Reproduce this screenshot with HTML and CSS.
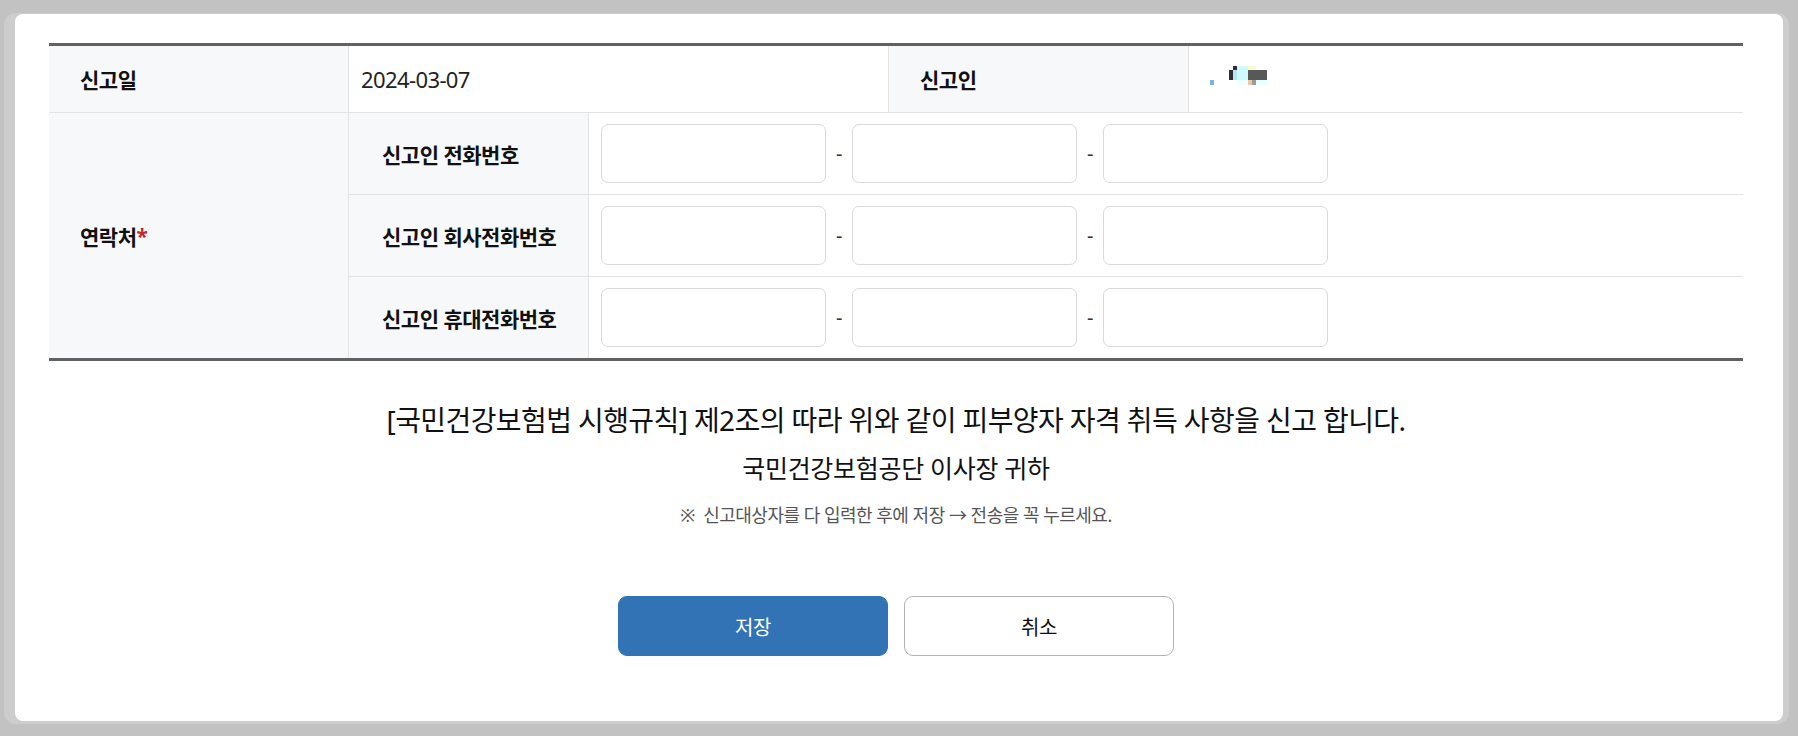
FILE: index.html
```html
<!DOCTYPE html>
<html lang="ko">
<head>
    <meta charset="UTF-8">
    <meta name="viewport" content="width=device-width, initial-scale=1.0">
    <title>피부양자 자격 취득 신고</title>
    <link rel="stylesheet" href="styles.css">
</head>
<body>
<div class="frame">
    <div class="panel">

        <div class="form-grid">
            <div class="th">신고일</div>
            <div class="td wide date">2024-03-07</div>
            <div class="th">신고인</div>
            <div class="td last">
                <!-- 이름 모자이크 -->
                <svg class="mosaic" width="64" height="24" viewBox="0 0 64 24">
                    <rect x="2" y="16" width="4" height="5" fill="#7ab4e6"/>
                    <rect x="21" y="6" width="4" height="10" fill="#2e2e2e"/>
                    <rect x="25" y="2" width="4" height="4" fill="#2e2e2e"/>
                    <rect x="25" y="6" width="4" height="10" fill="#b6e4ff"/>
                    <rect x="29" y="2" width="11" height="14" fill="#ccfaff"/>
                    <rect x="40" y="2" width="8" height="4" fill="#fff6d6"/>
                    <rect x="40" y="6" width="19" height="10" fill="#585858"/>
                    <rect x="29" y="16" width="11" height="5" fill="#f0ffff"/>
                    <rect x="40" y="16" width="4" height="5" fill="#f0c8a0"/>
                    <rect x="44" y="16" width="4" height="5" fill="#9a9a9a"/>
                    <rect x="48" y="16" width="11" height="5" fill="#e6ffff"/>
                </svg>
            </div>

            <div class="th contact">연락처<span class="req">*</span></div>
            <div class="th sub">신고인 전화번호</div>
            <div class="td phone last">
                <input type="text"><span class="dash">-</span><input type="text"><span class="dash">-</span><input type="text">
            </div>
            <div class="th sub">신고인 회사전화번호</div>
            <div class="td phone last">
                <input type="text"><span class="dash">-</span><input type="text"><span class="dash">-</span><input type="text">
            </div>
            <div class="th sub end">신고인 휴대전화번호</div>
            <div class="td phone last end">
                <input type="text"><span class="dash">-</span><input type="text"><span class="dash">-</span><input type="text">
            </div>
        </div>

        <p class="notice">[국민건강보험법 시행규칙] 제2조의 따라 위와 같이 피부양자 자격 취득 사항을 신고 합니다.</p>
        <p class="to">국민건강보험공단 이사장 귀하</p>
        <p class="tip">※&nbsp; 신고대상자를 다 입력한 후에 저장 → 전송을 꼭 누르세요.</p>

        <div class="btns">
            <button type="button" class="btn save">저장</button>
            <button type="button" class="btn cancel">취소</button>
        </div>

    </div>
</div>
</body>
</html>
```

FILE: styles.css
```css
body {
    margin: 0;
    background-color: #c1c2c1;
    font-family: "Noto Sans", "Noto Sans CJK KR", sans-serif;
    color: #111;
}

.frame {
    margin: 13px 9px 0 4px;
    padding: 1px 6px 3px 11px;
    background-color: #cdcdcd;
    border-radius: 12px;
}

.panel {
    height: 707px;
    box-sizing: border-box;
    padding: 29px 40px 0 34px;
    background-color: #fff;
    border-radius: 8px;
}

/* 신고 표 */
.form-grid {
    display: grid;
    grid-template-columns: 300px 240px 300px 300px 1fr;
    grid-template-rows: 67px 82px 82px 81px;
    border-top: 3px solid #616161;
    border-bottom: 3px solid #616161;
}

.th, .td {
    display: flex;
    align-items: center;
    border-right: 1px solid #e3e3e3;
    border-bottom: 1px solid #e3e3e3;
    font-size: 21px;
    letter-spacing: -0.5px;
}

.th {
    padding-left: 31px;
    background-color: #f7f8fa;
    font-weight: 600;
}

.td {
    padding-left: 12px;
    color: #222;
}

.date {
    font-size: 22px;
    letter-spacing: -0.6px;
}

.wide {
    grid-column: span 2;
}

.last {
    border-right: 0;
}

.end {
    border-bottom: 0;
}

.contact {
    grid-row: span 3;
    border-bottom: 0;
}

.sub {
    padding-left: 33px;
}

.req {
    color: #c3262c;
    font-weight: 700;
}

.mosaic {
    display: block;
    margin-left: 7px;
    margin-top: -6px;
}

.phone {
    grid-column: span 3;
}

.phone input {
    flex: none;
    width: 225px;
    height: 59px;
    box-sizing: border-box;
    border: 1px solid #d9d9d9;
    border-radius: 7px;
    background: #fff;
    margin: 0;
}

.dash {
    flex: none;
    width: 26px;
    text-align: center;
    color: #333;
    font-size: 20px;
}

/* 안내 문구 */
.notice {
    margin: 41px 0 0;
    text-align: center;
    font-size: 28px;
    line-height: 36px;
    letter-spacing: -0.6px;
    color: #111;
}

.to {
    margin: 14px 0 0;
    text-align: center;
    font-size: 25px;
    line-height: 32px;
    letter-spacing: -0.3px;
    color: #111;
}

.tip {
    margin: 19px 0 0;
    text-align: center;
    font-size: 18px;
    line-height: 24px;
    letter-spacing: -0.5px;
    color: #555;
}

.btns {
    display: flex;
    justify-content: center;
    gap: 16px;
    margin-top: 69px;
}

.btn {
    width: 270px;
    height: 60px;
    border-radius: 9px;
    font-family: "Noto Sans", "Noto Sans CJK KR", sans-serif;
    font-size: 20px;
    letter-spacing: -0.5px;
    cursor: pointer;
}

.save {
    background-color: #3273b5;
    border: 1px solid #3273b5;
    color: #fff;
}

.cancel {
    background-color: #fff;
    border: 1px solid #b3b3b3;
    color: #111;
}
```
